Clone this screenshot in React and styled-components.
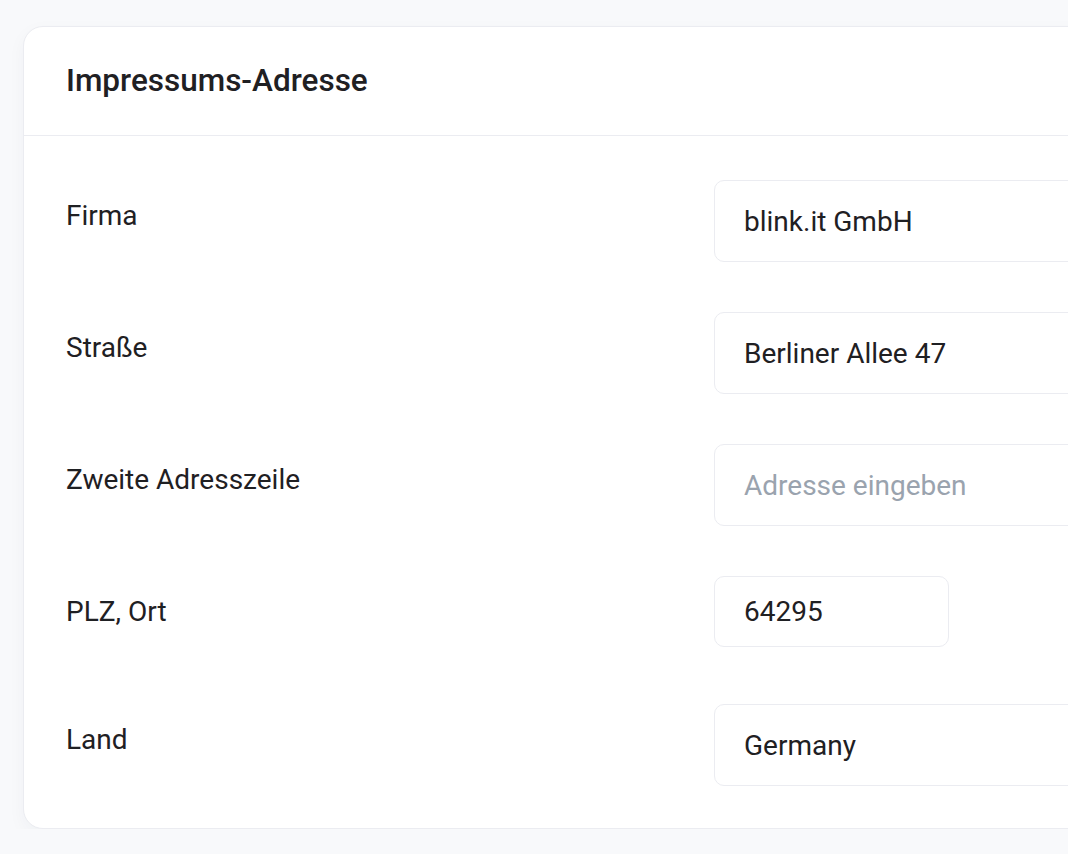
import React from "react";
import styled, { createGlobalStyle } from "styled-components";

const GlobalStyle = createGlobalStyle`
  html, body {
    margin: 0;
    padding: 0;
    background: #f8f9fb;
    overflow: hidden;
  }
  body {
    font-family: Roboto, "Noto Sans", "Liberation Sans", sans-serif;
    color: #1f2023;
  }
`;

const Page = styled.main`
  padding: 26px 0 0 23px;
  width: 1700px;
`;

const Card = styled.section`
  background: #ffffff;
  border: 1px solid #ebecf1;
  border-radius: 20px;
  box-shadow: 0 6px 18px rgba(30, 40, 70, 0.04);
`;

const CardHeader = styled.header`
  padding: 32px 42px 32px;
  border-bottom: 1px solid #ebecf1;
`;

const Title = styled.h2`
  margin: 0;
  font-size: 31.5px;
  line-height: 44px;
  font-weight: 500;
  color: #1f2023;
`;

const CardBody = styled.div`
  padding: 44px 42px 42px;
  display: flex;
  flex-direction: column;
  gap: 50px;
`;

const Row = styled.div`
  display: grid;
  grid-template-columns: 648px 1fr;
  align-items: start;
  min-height: ${(p) => p.$minHeight || "auto"};
`;

const Label = styled.label`
  padding-top: 15px;
  font-size: 28px;
  line-height: 42px;
  color: #1f2023;
`;

const Input = styled.input`
  box-sizing: border-box;
  width: ${(p) => p.$width || "100%"};
  height: ${(p) => (p.$compact ? "71px" : "82px")};
  padding: 0 29px;
  border: 1.5px solid #ebecf1;
  border-radius: 10px;
  background: #ffffff;
  font-family: Roboto, "Noto Sans", "Liberation Sans", sans-serif;
  font-size: 28px;
  color: #1f2023;
  outline: none;

  &::placeholder {
    color: #9aa3ae;
  }
`;

const fields = [
  { id: "firma", label: "Firma", value: "blink.it GmbH" },
  { id: "strasse", label: "Straße", value: "Berliner Allee 47" },
  { id: "zeile2", label: "Zweite Adresszeile", value: "", placeholder: "Adresse eingeben" },
  { id: "plz", label: "PLZ, Ort", value: "64295", width: "235px", compact: true, minHeight: "78px" },
  { id: "land", label: "Land", value: "Germany" },
];

export default function App() {
  return (
    <>
      <GlobalStyle />
      <Page>
        <Card>
          <CardHeader>
            <Title>Impressums-Adresse</Title>
          </CardHeader>
          <CardBody>
            {fields.map((f) => (
              <Row key={f.id} $minHeight={f.minHeight}>
                <Label htmlFor={f.id}>{f.label}</Label>
                <Input
                  id={f.id}
                  defaultValue={f.value}
                  placeholder={f.placeholder}
                  $width={f.width}
                  $compact={f.compact}
                />
              </Row>
            ))}
          </CardBody>
        </Card>
      </Page>
    </>
  );
}
